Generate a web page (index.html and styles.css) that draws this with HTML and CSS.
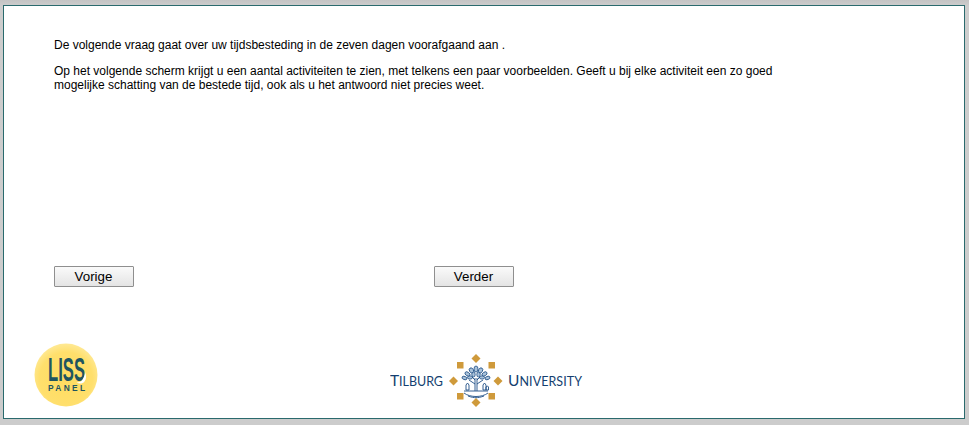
FILE: index.html
```
<!DOCTYPE html>
<html lang="nl">
<head>
<meta charset="utf-8">
<title>LISS Panel</title>
<link rel="stylesheet" href="styles.css">
</head>
<body>
<main class="frame">
  <section class="intro">
    <p>De volgende vraag gaat over uw tijdsbesteding in de zeven dagen voorafgaand aan .</p>
    <p>Op het volgende scherm krijgt u een aantal activiteiten te zien, met telkens een paar voorbeelden. Geeft u bij elke activiteit een zo goed mogelijke schatting van de bestede tijd, ook als u het antwoord niet precies weet.</p>
  </section>
  <div class="nav">
    <div class="nav-cell"><button class="btn" type="button">Vorige</button></div>
    <div class="nav-cell"><button class="btn" type="button">Verder</button></div>
  </div>
  <footer class="logos">
    <svg class="liss" width="64" height="64" viewBox="0 0 64 64" aria-label="LISS Panel">
      <defs>
        <radialGradient id="ball" cx="50%" cy="56%" r="56%">
          <stop offset="0" stop-color="#ffdc60"/>
          <stop offset="0.75" stop-color="#ffdf6c"/>
          <stop offset="1" stop-color="#ffe994"/>
        </radialGradient>
      </defs>
      <circle cx="32" cy="32" r="31.5" fill="url(#ball)"/>
      <text class="liss-word" x="14" y="38" textLength="37" lengthAdjust="spacingAndGlyphs">LISS</text>
      <path d="M51 29c1.500 3 1.500 7-.5 9.500s-5 2.500-8 1c3 0 5-1 6-3s2.500-4 2.500-7.500z" fill="#fff"/>
      <text class="liss-sub" x="14" y="48" textLength="37">PANEL</text>
    </svg>
    <svg class="tilburg" width="194" height="60" viewBox="0 0 194 60" aria-label="Tilburg University">
      <g class="tu-text">
        <text x="0" y="36" textLength="53"><tspan class="big">T</tspan>ILBURG</text>
        <text x="118" y="36" textLength="74"><tspan class="big">U</tspan>NIVERSITY</text>
      </g>
      <g fill="#cf9a3b">
        <path d="M86 4l4.500 4.500-4.500 4.500-4.500-4.500z"/>
        <path d="M86 48l4.500 4.500-4.500 4.500-4.500-4.500z"/>
        <path d="M63.500 26.500l4.500 4.500-4.500 4.500-4.500-4.500z"/>
        <path d="M108 26.500l4.500 4.500-4.500 4.500-4.500-4.500z"/>
        <rect x="67" y="12" width="6.500" height="6.500"/>
        <rect x="98.500" y="12" width="6.500" height="6.500"/>
        <rect x="67" y="43" width="6.500" height="6.500"/>
        <rect x="98.500" y="43" width="6.500" height="6.500"/>
      </g>
      <g class="leaves">
        <ellipse cx="86" cy="19" rx="2" ry="3"/>
        <ellipse cx="81.500" cy="20.500" rx="2" ry="2.800" transform="rotate(-30 81.500 20.500)"/>
        <ellipse cx="90.500" cy="20.500" rx="2" ry="2.800" transform="rotate(30 90.500 20.500)"/>
        <ellipse cx="77.500" cy="24" rx="1.800" ry="2.800" transform="rotate(-55 77.500 24)"/>
        <ellipse cx="94.500" cy="24" rx="1.800" ry="2.800" transform="rotate(55 94.500 24)"/>
        <ellipse cx="74.500" cy="28" rx="1.600" ry="2.600" transform="rotate(-70 74.500 28)"/>
        <ellipse cx="97.500" cy="28" rx="1.600" ry="2.600" transform="rotate(70 97.500 28)"/>
        <ellipse cx="83.500" cy="24.500" rx="1.700" ry="2.500"/>
        <ellipse cx="88.500" cy="24.500" rx="1.700" ry="2.500"/>
        <ellipse cx="80" cy="27.500" rx="2.500" ry="1.600"/>
        <ellipse cx="92" cy="27.500" rx="2.500" ry="1.600"/>
      </g>
      <g class="crest">
        <path d="M85 41V28M87 41V28M85 34l-6-4M87 34l6-4M85 30l-3-3M87 30l3-3"/>
        <path d="M76 40v-5l1.500-2 1.500 2v5zM93 40v-5l1.500-2 1.500 2v5zM96 40v-3l1.500-1 1 1v3z"/>
        <path d="M74 41h24"/>
        <path d="M74 43c3 2.500 8 3.500 12 3.500s9-1 12-3.500"/>
        <path d="M78 46c3 1.200 6 1.700 8 1.700s5-.5 8-1.700"/>
      </g>
    </svg>
  </footer>
</main>
</body>
</html>
```
FILE: styles.css
```
html, body {
  margin: 0;
  height: 100%;
}
body {
  background: linear-gradient(#c4c4c4, #cdcdcd 6px, #cccccc);
  padding: 5px 4px 6px 3px;
  box-sizing: border-box;
  font-family: "Liberation Sans", Arial, sans-serif;
  overflow: hidden;
}
.frame {
  box-sizing: border-box;
  height: 414px;
  background: #fff;
  border: 1px solid #2a6a6d;
  display: flex;
  flex-direction: column;
  padding: 32px 0 0 50px;
}
.intro {
  width: 730px;
  height: 228px;
  font-size: 12px;
  line-height: 14px;
  color: #000;
}
.intro p {
  margin: 0 0 12px;
}
.nav {
  display: flex;
}
.nav-cell {
  width: 380px;
}
.btn {
  display: block;
  width: 80px;
  height: 21px;
  padding: 0 1px 0 0;
  box-sizing: border-box;
  border: 1px solid #8f8f8f;
  border-radius: 1px;
  background: linear-gradient(#fafafa, #e4e4e4);
  font: 13.33px "Liberation Sans", Arial, sans-serif;
  color: #000;
}
.logos {
  position: relative;
  flex: 1;
}
.liss {
  position: absolute;
  left: -20px;
  top: 56px;
}
.tilburg {
  position: absolute;
  left: 336px;
  top: 63px;
}
.liss-word {
  font: 700 33px "Liberation Sans", sans-serif;
  fill: #1f5560;
}
.liss-sub {
  font: 700 8.4px "Liberation Sans", sans-serif;
  fill: #1f5560;
}
.tu-text {
  font: 12.5px "Lato", sans-serif;
  fill: #143f70;
}
.tu-text .big {
  font-size: 15.5px;
}
.leaves {
  fill: #a9c2da;
  stroke: #1f4f86;
  stroke-width: 0.8;
}
.crest {
  fill: none;
  stroke: #1f4f86;
  stroke-width: 0.9;
}
```
